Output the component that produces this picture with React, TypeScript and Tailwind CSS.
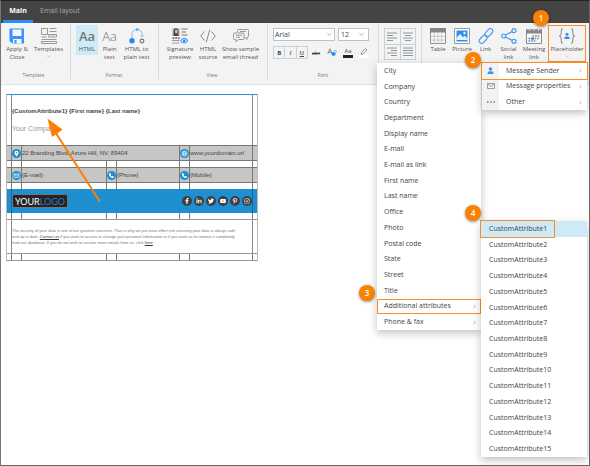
import { useState } from "react"
import type { ReactNode } from "react"
import { ChevronDown } from "lucide-react"
import { FaFacebookF, FaInstagram, FaLinkedinIn, FaPinterestP, FaTwitter, FaYoutube } from "react-icons/fa"

const SENDER_FIELDS = [
  "City",
  "Company",
  "Country",
  "Department",
  "Display name",
  "E-mail",
  "E-mail as link",
  "First name",
  "Last name",
  "Office",
  "Photo",
  "Postal code",
  "State",
  "Street",
  "Title",
  "Additional attributes",
  "Phone & fax"
]

const CUSTOM_ATTRIBUTES = Array.from({ length: 15 }, (_, index) => `CustomAttribute${index + 1}`)

const SOCIALS = [
  { name: "Facebook", Icon: FaFacebookF },
  { name: "LinkedIn", Icon: FaLinkedinIn },
  { name: "Twitter", Icon: FaTwitter },
  { name: "YouTube", Icon: FaYoutube },
  { name: "Pinterest", Icon: FaPinterestP },
  { name: "Instagram", Icon: FaInstagram }
]

const SaveIcon = () => (
  <svg width="16" height="16" viewBox="0 0 16 16" fill="none">
    <path d="M1 .5h14v15H3.500L.5 13V.5z" fill="#3b93f5" />
    <path d="M3.500 1.500h9v6.500h-9z" fill="#f4f7fb" />
    <path d="M4 11h8.500v4.500H4z" fill="#f4f7fb" />
    <path d="M5.500 12h2v3.500h-2z" fill="#3b93f5" />
  </svg>
)

const TemplatesIcon = () => (
  <svg width="16" height="16" viewBox="0 0 16 16" fill="none" stroke="#9a9a9a">
    <path d="M.5.5h6v6h-6zM8.500.5h7M8.500 3.500h7M7.500 6.500h8v2.500h-8zM.5 9h5M.5 11.500h15M.5 13.500h15v2H.5z" />
    <path d="M9 7.800h5" stroke="#c4c4c4" />
  </svg>
)

const ConvertIcon = () => (
  <svg width="16" height="16" viewBox="0 0 16 16" fill="none">
    <path d="M3 10V6.500C3 3.500 4.800 1.500 7.500 1.500h1C11.200 1.500 13 3.500 13 6.500V9" stroke="#7db5f4" strokeWidth=".9" />
    <path d="M11.500 7.500L13 9l1.500-1.500" stroke="#7db5f4" strokeWidth=".9" />
    <rect x="7" y=".3" width="2.400" height="2.400" fill="#5ba4f5" />
    <circle cx="3" cy="12.800" r="2.700" fill="#2389fa" />
    <circle cx="13" cy="13" r="1.900" stroke="#777" strokeWidth="1.100" />
  </svg>
)

const SignatureIcon = () => (
  <svg width="16" height="16" viewBox="0 0 16 16" fill="none">
    <rect width="8" height="8" fill="#c9cdc8" />
    <path d="M1.500 8V3a2.500 2.700 0 0 1 5 0v5z" fill="#5a4238" />
    <ellipse cx="4.300" cy="3.500" rx="1.400" ry="2" fill="#e2b79d" />
    <path d="M9.500 1h6M9.500 4h4.500M9.500 7h6" stroke="#777" />
    <path d="M.5 9.300h1.800v1.800H.5z" fill="#2d6fd0" />
    <path d="M3.200 9.300H5v1.800H3.200z" fill="#e0403c" />
    <path d="M5.900 9.300h1.800v1.800H5.900z" fill="#3d74d8" />
    <path d="M0 12.500h7.500M0 15h7.500" stroke="#999" />
    <path d="M8.800 12.700c1.700-3 5-3 6.700 0-1.700 3-5 3-6.700 0z" stroke="#4a9bf5" strokeWidth="1.200" />
    <circle cx="12.200" cy="12.700" r="1.300" fill="#2389fa" />
  </svg>
)

const CodeIcon = () => (
  <svg width="16" height="16" viewBox="0 0 16 16" fill="none" stroke="#8a8a8a">
    <path d="M4.500 3.500L.8 8l3.700 4.500M11.500 3.500l3.700 4.500-3.700 4.500M9.700 1.800l-3.400 12.400" />
  </svg>
)

const ThreadIcon = () => (
  <svg width="16" height="16" viewBox="0 0 16 16" fill="none" stroke="#8f8f8f" strokeWidth=".9">
    <path d="M4.500 4V2.500a1 1 0 0 1 1-1h9a1 1 0 0 1 1 1V8a1 1 0 0 1-1 1H14v2.500L11.500 9" />
    <path d="M1.500 5h8.500a1 1 0 0 1 1 1v4.500a1 1 0 0 1-1 1H5.500L3 14v-2.500H1.500a1 1 0 0 1-1-1V6a1 1 0 0 1 1-1z" fill="#f3f3f3" />
    <path d="M3 7.300h6M3 9.300h4M7 3.500h6" />
  </svg>
)

const TableIcon = () => (
  <svg width="16" height="16" viewBox="0 0 16 16" fill="none">
    <path d="M.5.5h15v15H.5z" fill="#fafafa" stroke="#8c8c8c" />
    <path d="M0 0h16v4.500H0z" fill="#858585" />
    <path d="M4.300 4v12M8 4v12M11.700 4v12M0 8.300h16M0 12.100h16" stroke="#b5b5b5" strokeWidth=".7" />
  </svg>
)

const PictureIcon = () => (
  <svg width="16" height="16" viewBox="0 0 16 16" fill="none">
    <path d="M.5.5h15v15H.5z" fill="#fff" stroke="#999" />
    <path d="M2.500 2.500h11v11h-11z" fill="#2f8ff5" />
    <path d="M2.500 10l3.500-4 3 3.200 1.800-1.500 2.700 2.800v1.500h-11z" fill="#eaf4ff" />
    <circle cx="10.500" cy="5" r="1.200" fill="#eaf4ff" />
  </svg>
)

const LinkIcon = () => (
  <svg width="16" height="16" viewBox="0 0 16 16" fill="none" stroke="#4a98f0" strokeWidth="1.200">
    <rect x="-4.800" y="-2.500" width="9.600" height="5" rx="2.500" transform="translate(10.800 4.800) rotate(-48)" />
    <rect x="-4.800" y="-2.500" width="9.600" height="5" rx="2.500" transform="translate(5.200 11.200) rotate(-48)" />
  </svg>
)

const ShareIcon = () => (
  <svg width="16" height="16" viewBox="0 0 16 16" fill="none" stroke="#4a98f0" strokeWidth="1.200">
    <circle cx="2.700" cy="8" r="2" />
    <circle cx="13" cy="2.700" r="2" />
    <circle cx="13" cy="13.300" r="2" />
    <path d="M4.500 7l6.700-3.400M4.500 9l6.700 3.400" />
  </svg>
)

const CalendarIcon = () => (
  <svg width="16" height="16" viewBox="0 0 16 16" fill="none">
    <path d="M.5 2h15v13.500H.5z" fill="#f8f8f8" stroke="#8c8c8c" />
    <path d="M0 1.500h16v4H0z" fill="#858585" />
    <path d="M3.500 0v3M8 0v3M12.500 0v3" stroke="#ddd" />
    <path d="M6.500 8h7M2.500 10.500h2M8.500 10.500h5M2.500 13h8" stroke="#888" strokeWidth="1.500" strokeDasharray="1.700 .9" />
    <circle cx="6.500" cy="10.500" r="1.600" fill="#3b93f5" />
  </svg>
)

const PersonIcon = () => (
  <svg width="7" height="7" viewBox="0 0 7 7" fill="#3b8ef0">
    <circle cx="3.500" cy="1.900" r="1.700" />
    <path d="M.5 7c0-2 1-2.700 2-2.700h2c1 0 2 .7 2 2.700z" />
  </svg>
)

const PlaceholderIcon = () => (
  <svg width="16" height="16" viewBox="0 0 16 16" fill="none">
    <path
      d="M4 .7C2 .7 2.300 2 2.300 4.500S2 7.500.5 8c1.500.5 1.800 1 1.800 3.500S2 15.300 4 15.300M12 .7c2 0 1.700 1.300 1.700 3.800s.3 3 1.800 3.500c-1.500.5-1.800 1-1.800 3.500s.3 3.800-1.700 3.800"
      stroke="#8f8f8f"
      strokeWidth="1.100"
    />
    <circle cx="8" cy="6.300" r="1.500" fill="#2f8ff5" />
    <path d="M5.300 11c0-1.800 1-2.500 1.700-2.500h2c.7 0 1.700.7 1.700 2.500z" fill="#2f8ff5" />
  </svg>
)

const EnvelopeIcon = () => (
  <svg width="8" height="6" viewBox="0 0 8 6" fill="none" stroke="#888" strokeWidth=".8">
    <path d="M.5.5h7v5h-7zM.5.5L4 3.500 7.500.5" />
  </svg>
)

const DotsIcon = () => (
  <svg width="8" height="2" viewBox="0 0 8 2" fill="#777">
    <path d="M0 .3h1.500v1.500H0zM3.200.3h1.500v1.500H3.200zM6.400.3h1.500v1.500H6.400z" />
  </svg>
)

const Chevron = () => (
  <svg width="3" height="5" viewBox="0 0 3 5" fill="none" stroke="#999" strokeWidth=".7">
    <path d="M.5.8L2.200 2.500.5 4.200" />
  </svg>
)

const ALIGN_PATHS = [
  { label: "Align left", d: "M0 1h10M0 3.500h6M0 6h10M0 8.500h6" },
  { label: "Align center", d: "M0 1h10M2 3.500h6M0 6h10M2 8.500h6" },
  { label: "Align right", d: "M0 1h10M4 3.500h6M0 6h10M4 8.500h6" },
  { label: "Justify", d: "M0 1h10M0 3.500h10M0 6h10M0 8.500h10" }
]

const Badge = ({ value, className }: { value: number; className: string }) => (
  <span
    className={`absolute z-30 flex size-4 items-center justify-center rounded-full bg-[#fb8103] text-[8px] leading-none font-semibold text-white shadow-[0_1px_3px_rgba(0,0,0,0.45)] ${className}`}>
    {value}
  </span>
)

const Group = ({ label, className, children }: { label: string; className: string; children: ReactNode }) => (
  <section className={`flex shrink-0 flex-col pt-[2px] ${className}`}>
    <div className="flex h-[46px] items-start">{children}</div>
    <p className="text-center text-[5px] leading-[8px] text-[#777]">{label}</p>
  </section>
)

const Tool = ({ lines, className, children }: { lines: string[]; className: string; children: ReactNode }) => (
  <button type="button" className={`relative flex shrink-0 flex-col items-center pt-[3px] ${className}`}>
    <span className="flex h-4 items-center justify-center">{children}</span>
    <span className="mt-px flex flex-col text-[6px] leading-[8px] whitespace-nowrap text-[#555]">
      {lines.map((line) => (
        <span key={line}>{line}</span>
      ))}
    </span>
  </button>
)

const FontControls = () => (
  <div className="flex flex-col gap-[5px] pt-[3px]">
    <div className="flex gap-[3px]">
      <div className="relative">
        <select
          aria-label="Font family"
          className="block h-[13px] w-[62px] appearance-none border border-[#b9c2cf] bg-white pl-px text-[7px] leading-[11px] text-[#444]">
          <option>Arial</option>
        </select>
        <ChevronDown className="pointer-events-none absolute top-[3px] right-[2px] size-[7px] text-[#777]" />
      </div>
      <div className="relative">
        <select
          aria-label="Font size"
          className="block h-[13px] w-[31px] appearance-none border border-[#b9c2cf] bg-white pl-[2px] text-[7px] leading-[11px] text-[#444]">
          <option>12</option>
        </select>
        <ChevronDown className="pointer-events-none absolute top-[3px] right-[4px] size-[7px] text-[#777]" />
      </div>
    </div>
    <div className="flex items-center text-[6px] leading-[8px] text-[#444]">
      <div className="flex h-[13px] w-[35px] divide-x divide-[#c3d2df] border border-[#c3d2df]">
        <button type="button" className="flex-1 font-bold">B</button>
        <button type="button" className="flex-1 font-semibold italic">I</button>
        <button type="button" className="flex-1 font-semibold underline">U</button>
      </div>
      <button type="button" className="w-4 text-[5px] line-through">abc</button>
      <button type="button" className="flex w-4 justify-center" aria-label="Clear formatting">
        <svg width="10" height="9" viewBox="0 0 10 9" fill="none">
          <path d="M.7 6L3 .8 5.200 6M1.500 4.300h3" stroke="#777" strokeWidth=".9" />
          <path d="M4 6l2.500-2.500L9 6 6.500 8.500z" fill="#2389fa" />
          <path d="M6.800 3.300l1.500-1.300 1.200 1.300-1 1.700" stroke="#5ba4f5" strokeWidth=".8" />
        </svg>
      </button>
      <button type="button" className="flex w-4 flex-col items-center">
        <span className="leading-[7px]">Aa</span>
        <span className="h-[3px] w-[10px] bg-[#222]" />
      </button>
      <button type="button" className="flex w-4 flex-col items-center" aria-label="Highlight colour">
        <svg width="8" height="7" viewBox="0 0 8 7" fill="none" stroke="#888" strokeWidth=".8">
          <path d="M1 6.300l.5-2L5.500.5l1.500 1.500L3 5.800z" />
        </svg>
        <span className="h-[3px] w-[10px] bg-white" />
      </button>
    </div>
  </div>
)

const Ribbon = () => (
  <div className="flex items-stretch border-b border-[#d9e3ec] bg-[#f3f3f3] pb-[5px]">
    <div className="flex divide-x divide-[#d3dae0]">
      <Group label="Template" className="w-[70px] pr-[4px]">
        <Tool lines={["Apply &", "Close"]} className="w-[32px]">
          <SaveIcon />
        </Tool>
        <Tool lines={["Templates"]} className="w-[31px]">
          <TemplatesIcon />
          <ChevronDown className="absolute top-[29px] size-[5px] text-[#999]" />
        </Tool>
      </Group>
      <Group label="Format" className="w-[88px] pr-[6px] pl-[5px]">
        <Tool lines={["HTML"]} className="h-[30px] w-[22px] bg-[#cdeaf6]">
          <span className="text-[13px] leading-4 font-semibold text-[#777]">Aa</span>
        </Tool>
        <Tool lines={["Plain", "text"]} className="w-[23px]">
          <span className="text-[13px] leading-4 font-light text-[#777]">Aa</span>
        </Tool>
        <Tool lines={["HTML to", "plain text"]} className="w-[31px]">
          <ConvertIcon />
        </Tool>
      </Group>
      <Group label="View" className="w-[109px] pr-[8px] pl-[6px]">
        <Tool lines={["Signature", "preview"]} className="w-[30px]">
          <SignatureIcon />
        </Tool>
        <Tool lines={["HTML", "source"]} className="w-[26px]">
          <CodeIcon />
        </Tool>
        <Tool lines={["Show sample", "email thread"]} className="w-[39px]">
          <ThreadIcon />
        </Tool>
      </Group>
      <Group label="Font" className="w-[111px] px-[5px]">
        <FontControls />
      </Group>
      <Group label="" className="w-[43px] px-[5px]">
        <div className="mt-[3px] grid h-8 w-8 grid-cols-2 grid-rows-2 gap-px border border-[#c3d2df] bg-[#c3d2df]">
          {ALIGN_PATHS.map(({ label, d }) => (
            <button key={label} type="button" aria-label={label} className="flex items-center justify-center bg-[#f3f3f3]">
              <svg width="10" height="9" viewBox="0 0 10 9" stroke="#8a8a8a" strokeWidth=".9">
                <path d={d} />
              </svg>
            </button>
          ))}
        </div>
      </Group>
      <Group label="" className="pl-[4px]">
        <Tool lines={["Table"]} className="w-[24px]">
          <TableIcon />
        </Tool>
        <Tool lines={["Picture"]} className="w-[24px]">
          <PictureIcon />
        </Tool>
        <Tool lines={["Link"]} className="w-[23px]">
          <LinkIcon />
        </Tool>
        <Tool lines={["Social", "link"]} className="w-[23px]">
          <ShareIcon />
        </Tool>
        <Tool lines={["Meeting", "link"]} className="w-[28px]">
          <CalendarIcon />
        </Tool>
        <div className="relative">
          <Tool lines={["Placeholder"]} className="h-[37px] w-[38px] outline outline-[#f98d28] -outline-offset-1">
            <PlaceholderIcon />
            <ChevronDown className="absolute top-[29px] size-[5px] text-[#999]" />
          </Tool>
          <Badge value={1} className="-top-[15px] -left-[15px]" />
        </div>
      </Group>
    </div>
  </div>
)

const COLUMNS = "grid grid-cols-[5px_10px_85px_10px_63px_10px_63px_1fr]"

const Spacer = () => (
  <div className={`${COLUMNS} h-[6px] divide-x divide-[#777]`}>
    {Array.from({ length: 8 }, (_, index) => (
      <span key={index} />
    ))}
  </div>
)

const RoundIcon = ({ kind }: { kind: "pin" | "globe" | "mail" | "phone" }) => (
  <svg width="9" height="9" viewBox="0 0 9 9" fill="none" className="shrink-0">
    <circle cx="4.500" cy="4.500" r="4.500" fill="#1f8fd1" />
    {kind === "pin" ? (
      <path d="M4.500 7.500C3 5.500 2.500 4.500 2.500 3.700a2 2 0 0 1 4 0c0 .8-.5 1.800-2 3.800zM4.500 3a.7.7 0 1 0 0 1.400.7.7 0 0 0 0-1.400z" fill="#fff" fillRule="evenodd" />
    ) : null}
    {kind === "globe" ? (
      <g stroke="#fff" strokeWidth=".5">
        <circle cx="4.500" cy="4.500" r="2.600" />
        <ellipse cx="4.500" cy="4.500" rx="1.200" ry="2.600" />
        <path d="M2 4.500h5M2.400 3.200h4.200M2.400 5.800h4.200" />
      </g>
    ) : null}
    {kind === "mail" ? <path d="M2 3h5v3.300H2zM2 3l2.500 1.900L7 3" stroke="#fff" strokeWidth=".7" /> : null}
    {kind === "phone" ? (
      <path d="M3.200 2l.9 1.400-.5.600c.3.700.8 1.200 1.500 1.500l.600-.5L7 5.800c-.2 1-.8 1.300-1.500 1.200C3.800 6.800 2.200 5.200 2 3.500 1.900 2.800 2.300 2.200 3.200 2z" fill="#fff" />
    ) : null}
  </svg>
)

const CELL = "flex items-center border-r border-[#777]"

const EmailPreview = () => (
  <article className="relative w-[252px] border border-t-[#2b93d6] border-r-[#bbb] border-b-[#999] border-l-[#bbb] bg-white font-['Liberation_Sans',sans-serif] text-[6px] leading-[8px] text-[#444]">
    <div className="grid h-[50px] grid-cols-[5px_241px_1fr] divide-x divide-[#888]">
      <span />
      <div className="pt-3">
        <p className="font-bold whitespace-nowrap">{"{CustomAttribute1} {First name} {Last name}"}</p>
        <p className="mt-[10px] text-[7px] text-[#999]">Your Company</p>
      </div>
      <span />
    </div>
    <div className="grid h-4 grid-cols-[5px_10px_158px_10px_63px_1fr] border-y border-[#777] bg-[#c6c6c4] whitespace-nowrap">
      <span className={CELL} />
      <span className={CELL}><RoundIcon kind="pin" /></span>
      <span className={CELL}>22 Branding Blvd, Azure Hill, NV, 89404</span>
      <span className={CELL}><RoundIcon kind="globe" /></span>
      <span className={CELL}>www.yourdomain.url</span>
    </div>
    <Spacer />
    <div className={`${COLUMNS} h-4 border-y border-[#777] bg-[#c6c6c4] whitespace-nowrap`}>
      <span className={CELL} />
      <span className={CELL}><RoundIcon kind="mail" /></span>
      <span className={CELL}>{"{E-mail}"}</span>
      <span className={CELL}><RoundIcon kind="phone" /></span>
      <span className={CELL}>{"{Phone}"}</span>
      <span className={CELL}><RoundIcon kind="phone" /></span>
      <span className={CELL}>{"{Mobile}"}</span>
    </div>
    <Spacer />
    <div className="grid h-6 grid-cols-[5px_241px_1fr] divide-x divide-[#17699c] bg-[#1e90d2]">
      <span />
      <div className="flex items-center justify-between">
        <span className="flex h-[14px] items-center rounded-[2px] border border-[#777] bg-[#222427] px-[2px] font-[Lato,sans-serif] text-[9px] leading-none text-white">
          YOUR<span className="text-[#3a78b5]">LOGO</span>
        </span>
        <div className="flex gap-[2px]">
          {SOCIALS.map(({ name, Icon }) => (
            <a key={name} href="#" aria-label={name} className="flex size-[10px] items-center justify-center rounded-full bg-[#3d4043] text-white">
              <Icon className="size-[6px]" />
            </a>
          ))}
        </div>
      </div>
      <span />
    </div>
    <Spacer />
    <div className="grid h-[35px] grid-cols-[5px_241px_1fr] divide-x divide-[#888] border-y border-[#999]">
      <span />
      <div className="flex flex-col justify-center text-[4px] leading-[6px] whitespace-nowrap text-[#777]">
        <p>The security of your data is one of our greatest concerns. That is why we put extra effort into ensuring your data is always safe</p>
        <p>
          and up to date. <a href="#" className="text-[#333] underline">Contact us</a> if you want to access or change your personal information or if you want us to remove it completely
        </p>
        <p>
          from our database. If you do not wish to receive more emails from us, click <a href="#" className="text-[#333] underline">here</a>.
        </p>
      </div>
      <span />
    </div>
    <Spacer />
    <svg width="62" height="90" viewBox="0 0 62 90" className="absolute top-[22px] left-[38px]" fill="#fb7f05">
      <path d="M54.500 84L11.500 17" stroke="#fb7f05" strokeWidth="2" strokeLinecap="round" />
      <path d="M2.500 1.500L17.500 12.500 12.500 16.500 7 20z" />
    </svg>
  </article>
)

const PlaceholderMenu = () => (
  <div role="menu" className="absolute top-[62px] right-[2px] z-10 grid h-[47px] w-[105px] auto-rows-fr bg-white shadow-[0_3px_8px_rgba(0,0,0,0.25)]">
    {[
      { label: "Message Sender", icon: <PersonIcon /> },
      { label: "Message properties", icon: <EnvelopeIcon /> },
      { label: "Other", icon: <DotsIcon /> }
    ].map(({ label, icon }, index) => (
      <button
        key={label}
        type="button"
        role="menuitem"
        className={`flex items-center pr-[5px] text-left ${index === 0 ? "z-10 outline outline-[#f98d28]" : ""}`}>
        <span className="flex w-[17px] items-center justify-center self-stretch bg-[#f2f2f2]">{icon}</span>
        <span className="flex-1 pl-[7px]">{label}</span>
        <Chevron />
      </button>
    ))}
    <Badge value={2} className="-top-[11px] -left-[17px]" />
  </div>
)

const SenderMenu = () => (
  <div role="menu" className="absolute top-[62px] right-[108px] z-10 grid h-[267px] w-[104px] auto-rows-fr bg-white shadow-[0_3px_8px_rgba(0,0,0,0.25)]">
    {SENDER_FIELDS.map((field) => (
      <button
        key={field}
        type="button"
        role="menuitem"
        className={`relative flex items-center justify-between pr-[5px] pl-[7px] text-left ${
          field === "Additional attributes" ? "z-10 outline outline-[#f98d28] -outline-offset-1" : ""
        }`}>
        {field}
        {field === "Additional attributes" || field === "Phone & fax" ? <Chevron /> : null}
        {field === "Additional attributes" ? <Badge value={3} className="-top-[14px] -left-[18px]" /> : null}
      </button>
    ))}
  </div>
)

const AttributeMenu = () => {
  const [selected, setSelected] = useState("CustomAttribute1")

  return (
    <div role="menu" className="absolute top-[220px] right-[2px] z-20 grid h-[236px] w-[106px] auto-rows-fr bg-white shadow-[0_3px_8px_rgba(0,0,0,0.25)]">
      {CUSTOM_ATTRIBUTES.map((attribute, index) => (
        <button
          key={attribute}
          type="button"
          role="menuitem"
          className={`flex items-stretch text-left ${attribute === selected ? "bg-[#cdeaf6]" : ""}`}
          onClick={() => setSelected(attribute)}>
          <span className={`flex w-[73px] items-center pl-2 ${index === 0 ? "outline outline-[#f98d28]" : ""}`}>{attribute}</span>
        </button>
      ))}
      <Badge value={4} className="-top-4 -left-4" />
    </div>
  )
}

const App = () => (
  <main className="relative flex min-h-screen flex-col overflow-hidden border border-t-[#222] border-r-[#666] border-b-[#666] border-l-[#777] bg-white font-['Open_Sans',sans-serif] text-[7px] leading-[10px] text-[#444]">
    <nav className="flex h-[22px] items-stretch bg-[#444] px-[2px]">
      <button type="button" className="w-[30px] border-b-[3px] border-[#2b8ffb] font-bold text-white">
        Main
      </button>
      <button type="button" className="border-b-[3px] border-transparent px-[7px] text-[#aaa]">
        Email layout
      </button>
    </nav>
    <Ribbon />
    <div className="px-[5px] pt-[9px]">
      <EmailPreview />
    </div>
    <SenderMenu />
    <PlaceholderMenu />
    <AttributeMenu />
  </main>
)

export default App
